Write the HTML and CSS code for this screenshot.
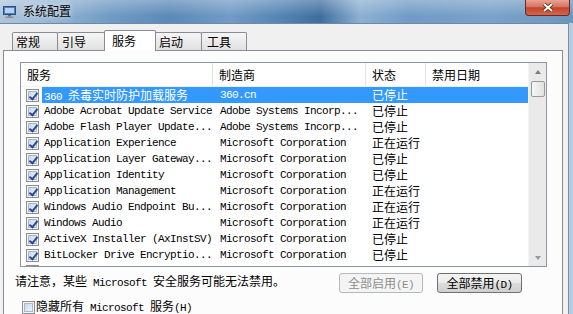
FILE: index.html
```html
<!DOCTYPE html>
<html lang="zh-CN">
<head>
  <meta charset="UTF-8" />
  <title>系统配置</title>
  <link rel="stylesheet" href="styles.css">
</head>
<body>
  <div class="window">
    <div class="titlebar">
      <svg class="app-icon" width="13" height="12" viewBox="0 0 13 12">
        <rect x="0.5" y="0.5" width="12" height="8" fill="#4f7fb8" stroke="#2e4f7a"/>
        <rect x="2" y="2" width="9" height="5" fill="#b4d2f2"/>
        <rect x="5" y="9" width="3" height="1.5" fill="#6d6d6d"/>
        <rect x="2.5" y="10.5" width="8" height="1.5" fill="#8c8c8c"/>
      </svg>
      <span class="title">系统配置</span>
      <button class="close-btn">
        <svg width="12" height="9" viewBox="0 0 12 9">
          <path d="M2 1 L10 8 M10 1 L2 8" stroke="#5a1e14" stroke-width="3.6"/>
          <path d="M2 1 L10 8 M10 1 L2 8" stroke="#fff" stroke-width="2"/>
        </svg>
      </button>
    </div>

    <div class="client">
      <div class="tabs">
        <div class="tab t1">常规</div>
        <div class="tab t2">引导</div>
        <div class="tab active">服务</div>
        <div class="tab t4">启动</div>
        <div class="tab t5">工具</div>
      </div>

      <div class="panel">
        <div class="listview">
          <div class="lv-main">
            <div class="lv-head">
              <div>服务</div>
              <div>制造商</div>
              <div>状态</div>
              <div>禁用日期</div>
            </div>
            <div class="lv-rows">
              <div class="lv-row selected">
                <div class="cell-chk"><span class="chk on"></span></div>
                <div class="c-name">360 <span class="cjk">杀毒实时防护加载服务</span></div>
                <div class="c-maker">360.cn</div>
                <div class="c-state">已停止</div>
                <div class="c-date"></div>
              </div>
              <div class="lv-row">
                <div class="cell-chk"><span class="chk on"></span></div>
                <div class="c-name">Adobe Acrobat Update Service</div>
                <div class="c-maker">Adobe Systems Incorp...</div>
                <div class="c-state">已停止</div>
                <div class="c-date"></div>
              </div>
              <div class="lv-row">
                <div class="cell-chk"><span class="chk on"></span></div>
                <div class="c-name">Adobe Flash Player Update...</div>
                <div class="c-maker">Adobe Systems Incorp...</div>
                <div class="c-state">已停止</div>
                <div class="c-date"></div>
              </div>
              <div class="lv-row">
                <div class="cell-chk"><span class="chk on"></span></div>
                <div class="c-name">Application Experience</div>
                <div class="c-maker">Microsoft Corporation</div>
                <div class="c-state">正在运行</div>
                <div class="c-date"></div>
              </div>
              <div class="lv-row">
                <div class="cell-chk"><span class="chk on"></span></div>
                <div class="c-name">Application Layer Gateway...</div>
                <div class="c-maker">Microsoft Corporation</div>
                <div class="c-state">已停止</div>
                <div class="c-date"></div>
              </div>
              <div class="lv-row">
                <div class="cell-chk"><span class="chk on"></span></div>
                <div class="c-name">Application Identity</div>
                <div class="c-maker">Microsoft Corporation</div>
                <div class="c-state">已停止</div>
                <div class="c-date"></div>
              </div>
              <div class="lv-row">
                <div class="cell-chk"><span class="chk on"></span></div>
                <div class="c-name">Application Management</div>
                <div class="c-maker">Microsoft Corporation</div>
                <div class="c-state">正在运行</div>
                <div class="c-date"></div>
              </div>
              <div class="lv-row">
                <div class="cell-chk"><span class="chk on"></span></div>
                <div class="c-name">Windows Audio Endpoint Bu...</div>
                <div class="c-maker">Microsoft Corporation</div>
                <div class="c-state">正在运行</div>
                <div class="c-date"></div>
              </div>
              <div class="lv-row">
                <div class="cell-chk"><span class="chk on"></span></div>
                <div class="c-name">Windows Audio</div>
                <div class="c-maker">Microsoft Corporation</div>
                <div class="c-state">正在运行</div>
                <div class="c-date"></div>
              </div>
              <div class="lv-row">
                <div class="cell-chk"><span class="chk on"></span></div>
                <div class="c-name">ActiveX Installer (AxInstSV)</div>
                <div class="c-maker">Microsoft Corporation</div>
                <div class="c-state">已停止</div>
                <div class="c-date"></div>
              </div>
              <div class="lv-row">
                <div class="cell-chk"><span class="chk on"></span></div>
                <div class="c-name">BitLocker Drive Encryptio...</div>
                <div class="c-maker">Microsoft Corporation</div>
                <div class="c-state">已停止</div>
                <div class="c-date"></div>
              </div>
              <div class="lv-row">
                <div class="cell-chk"><span class="chk on"></span></div>
              </div>
            </div>
          </div>
          <div class="scrollbar">
            <div class="sb-btn"><span class="arrow-up"></span></div>
            <div class="sb-thumb"></div>
            <div class="sb-track"></div>
            <div class="sb-btn"><span class="arrow-down"></span></div>
          </div>
        </div>

        <div class="footer">
          <div class="note">请注意，某些<span class="mono"> Microsoft </span>安全服务可能无法禁用。</div>
          <button class="btn" disabled>全部启用<span class="mono">(E)</span></button>
          <button class="btn btn-2">全部禁用<span class="mono">(D)</span></button>
        </div>

        <div class="hide-ms">
          <span class="chk"></span>
          <span class="hide-label">隐藏所有<span class="mono"> Microsoft </span>服务<span class="mono">(H)</span></span>
        </div>
      </div>
    </div>
  </div>
</body>
</html>
```

FILE: styles.css
```css
* {
  box-sizing: border-box;
}
body {
  margin: 0;
  width: 573px;
  height: 314px;
  overflow: hidden;
  font-family: "Noto Sans CJK SC", sans-serif;
  font-size: 12px;
  color: #000;
  background: #b7cce1;
}
.mono {
  font-family: "Liberation Mono", monospace;
  font-size: 11px;
  letter-spacing: -0.6px;
  white-space: pre;
}
.window {
  height: 314px;
  display: flex;
  flex-direction: column;
  overflow: hidden;
}

/* title bar */
.titlebar {
  height: 23px;
  flex: none;
  display: flex;
  align-items: flex-start;
  background:
    linear-gradient(180deg, rgba(255,255,255,0.28) 0%, rgba(255,255,255,0) 70%),
    linear-gradient(90deg, #aec6dd 0px, #93b3d2 55px, #709bc4 110px, #5c89b7 170px, #729bc5 230px, #5282b2 285px, #3f6e9e 320px, #8db0d2 360px, #719bc5 410px, #7aa2c9 490px, #6d96bf 573px);
}
.app-icon {
  margin: 6px 0 0 3px;
}
.title {
  margin-left: 7px;
  line-height: 22px;
  text-shadow: 0 0 6px rgba(255,255,255,0.9);
}
.close-btn {
  margin-left: auto;
  margin-right: 3px;
  width: 45px;
  height: 16px;
  padding: 0;
  border: 1px solid #6a2a22;
  border-top: none;
  border-radius: 0 0 4px 4px;
  background: linear-gradient(#e9a394 0%, #d6735f 45%, #c2452e 52%, #d5664b 100%);
  display: flex;
  align-items: center;
  justify-content: center;
}

/* client area */
.client {
  flex: 1;
  min-height: 0;
  overflow: hidden;
  margin-right: 4px;
  padding-left: 3px;
  background: #f0f0f0;
  border-top: 1px solid #6d89a8;
  border-right: 1px solid #7b8ea4;
}
.tabs {
  display: flex;
  align-items: flex-end;
  height: 20px;
  margin-top: 6px;
  padding-left: 9px;
}
.tab {
  height: 18px;
  padding-left: 4px;
  line-height: 17px;
  margin-right: -1px;
  border: 1px solid #898c95;
  border-bottom: none;
  border-radius: 2px 2px 0 0;
  background: linear-gradient(#f5f5f5, #e1e1e1);
}
.t1 { width: 46px; padding-left: 3px; }
.t2 { width: 48px; }
.t4 { width: 48px; }
.t5 { width: 46px; padding-left: 5px; }
.tab.active {
  width: 52px;
  height: 21px;
  padding-left: 7px;
  line-height: 19px;
  margin-right: -2px;
  margin-bottom: -1px;
  background: #fff;
  position: relative;
  z-index: 1;
}
.panel {
  height: 300px;
  margin-right: 5px;
  padding: 11px 15px 0 11px;
  background: #fcfcfc;
  border: 1px solid #898c95;
}

/* list view */
.listview {
  display: flex;
  width: 527px;
  height: 205px;
  margin-left: 5px;
  border: 1px solid #8e959e;
  background: #fff;
}
.lv-main {
  width: 507px;
}
.lv-head {
  display: grid;
  grid-template-columns: 192px 153px 60px 102px;
  height: 24px;
  border-bottom: 1px solid #f0f0f0;
}
.lv-head div {
  padding-left: 6px;
  line-height: 23px;
  border-right: 1px solid #e3e3e3;
}
.lv-head div:last-child {
  border-right: none;
}
.lv-rows {
  height: 179px;
  overflow: hidden;
}
.lv-row {
  display: grid;
  grid-template-columns: 21px 171px 153px 60px 102px;
  height: 16px;
  line-height: 16px;
  white-space: nowrap;
}
.lv-row > div {
  overflow: hidden;
}
.lv-row.selected > div:not(.cell-chk) {
  background: #3399ff;
  color: #fff;
}
.cell-chk {
  padding: 2px 0 0 5px;
}
.c-name,
.c-maker {
  font-family: "Liberation Mono", monospace;
  font-size: 11px;
  letter-spacing: -0.6px;
}
.c-name {
  padding-left: 2px;
}
.c-maker {
  padding-left: 7px;
}
.c-state {
  padding-left: 6px;
}
.cjk {
  font-family: "Noto Sans CJK SC", sans-serif;
  font-size: 12px;
  letter-spacing: 0;
}

/* checkbox */
.chk {
  display: block;
  width: 13px;
  height: 13px;
  position: relative;
  border: 1px solid #8f8f8f;
  background: #f4f4f4;
}
.chk::before {
  content: '';
  position: absolute;
  left: 1px;
  top: 1px;
  right: 1px;
  bottom: 1px;
  border: 1px solid #a8b8ce;
  background: linear-gradient(135deg, #c6d8ef, #eef3fa);
}
.chk.on::after {
  content: '';
  position: absolute;
  left: 4px;
  top: 1px;
  width: 3px;
  height: 7px;
  border: solid #2a4a96;
  border-width: 0 2px 2px 0;
  transform: rotate(38deg);
}

/* scrollbar */
.scrollbar {
  width: 18px;
  display: flex;
  flex-direction: column;
  background: #eaeaea;
  border-left: 1px solid #f4f4f4;
}
.sb-btn {
  height: 17px;
  display: flex;
  align-items: center;
  justify-content: center;
}
.arrow-up {
  border-left: 3px solid transparent;
  border-right: 3px solid transparent;
  border-bottom: 4px solid #7a7a7a;
}
.arrow-down {
  border-left: 3px solid transparent;
  border-right: 3px solid transparent;
  border-top: 4px solid #9a9a9a;
}
.sb-thumb {
  height: 16px;
  margin: 1px 1px 0 2px;
  border: 1px solid #9a9a9a;
  border-radius: 2px;
  background: linear-gradient(90deg, #f6f6f6, #e2e2e2);
}
.sb-track {
  flex: 1;
}

/* footer */
.footer {
  display: flex;
  align-items: flex-start;
  height: 20px;
  margin-top: 6px;
  margin-right: 25px;
}
.note {
  flex: 1;
  line-height: 16px;
}
.btn {
  width: 84px;
  height: 20px;
  padding: 0;
  font-family: "Noto Sans CJK SC", sans-serif;
  font-size: 12px;
  line-height: 18px;
  color: #000;
  border: 1px solid #707070;
  border-radius: 3px;
  background: linear-gradient(#f4f4f4 0%, #ebebeb 48%, #dcdcdc 52%, #cfcfcf 100%);
}
.btn:disabled {
  color: #8d8d8d;
  border-color: #b5b9bd;
  background: #f4f4f4;
}
.btn-2 {
  width: 85px;
  margin-left: 14px;
}
.hide-ms {
  display: flex;
  align-items: center;
  margin: 6px 0 0 7px;
}
.hide-label {
  margin-left: 1px;
  line-height: 13px;
}
```
